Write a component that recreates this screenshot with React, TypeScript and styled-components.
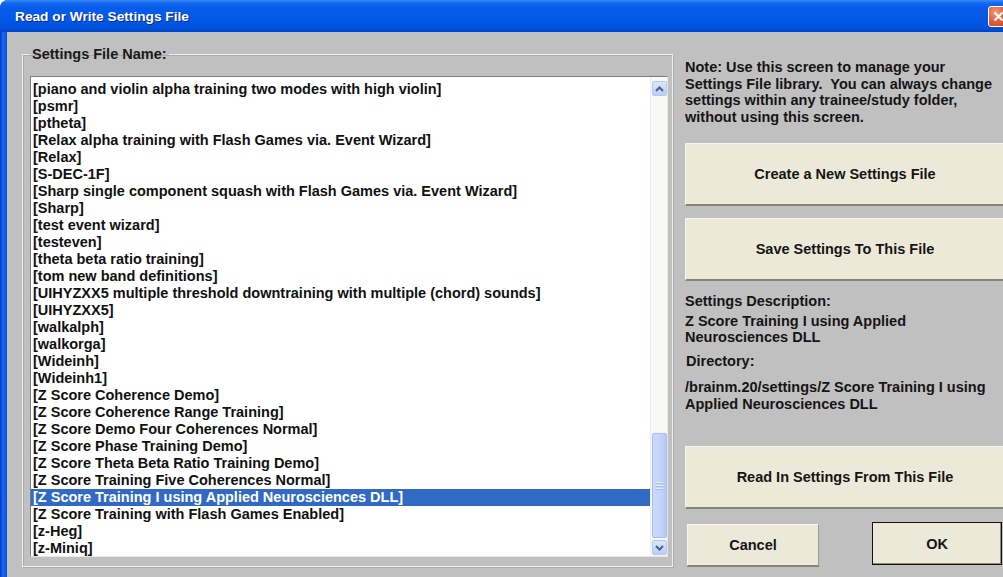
import React from "react";
import styled, { createGlobalStyle } from "styled-components";

const GlobalStyle = createGlobalStyle`
  html, body {
    margin: 0;
    padding: 0;
    width: 1003px;
    height: 577px;
    overflow: hidden;
    background: #ffffff;
  }
  #root {
    width: 1003px;
    height: 577px;
    overflow: hidden;
  }
  * { box-sizing: border-box; }
`;

const TEXT_SIZE = "14.5px";

const Window = styled.div`
  width: 1016px;
  height: 577px;
  display: flex;
  flex-direction: column;
  background: #0a4fd6;
  border-radius: 8px 8px 0 0;
  overflow: hidden;
  font-family: "Liberation Sans", Arial, sans-serif;
  font-weight: bold;
  color: #111111;
`;

const TitleBar = styled.div`
  height: 32px;
  flex: none;
  display: flex;
  align-items: center;
  justify-content: space-between;
  padding: 0 7px 0 15px;
  background: linear-gradient(
    to bottom,
    #3a8cf8 0px,
    #1468f0 3px,
    #065ce8 8px,
    #0458e6 20px,
    #0050dc 28px,
    #0044c8 32px
  );
`;

const TitleText = styled.span`
  color: #ffffff;
  font-size: 13.7px;
  font-weight: bold;
  text-shadow: 1px 1px 0 #0b2a8f;
`;

const CloseButton = styled.div`
  width: 21px;
  height: 21px;
  border: 1px solid #ffffff;
  border-radius: 3px;
  background: radial-gradient(circle at 35% 30%, #f19a7e 0%, #e2653f 45%, #c5401b 100%);
  display: flex;
  align-items: center;
  justify-content: center;
`;

const Frame = styled.div`
  flex: 1;
  display: flex;
  padding: 0 6px 0 7px;
  background: linear-gradient(to right, #0831c9 0px, #166aee 3px, #0b4fd8 7px);
  min-height: 0;
`;

const Content = styled.div`
  flex: 1;
  display: flex;
  align-items: flex-start;
  background: #c0c0c0;
  padding-left: 15px;
`;

const GroupBox = styled.fieldset`
  margin: 14px 0 0 0;
  width: 651px;
  height: 521px;
  padding: 14px 4px 8px 7px;
  border: 1px solid #efefef;
  box-shadow: inset 1px 1px 0 #a9a9a9, 1px 1px 0 #a9a9a9;
  display: flex;
  flex-direction: column;
`;

const Legend = styled.legend`
  padding: 0 2px;
  font-size: ${TEXT_SIZE};
  line-height: 16px;
  font-weight: bold;
  color: #1a1a1a;
`;

const ListBox = styled.div`
  width: 638px;
  height: 481px;
  display: flex;
  background: #ffffff;
  border: 1px solid;
  border-color: #7c7c7c #e6e6e6 #e6e6e6 #7c7c7c;
`;

const Rows = styled.div`
  flex: 1;
  padding-top: 4px;
  overflow: hidden;
`;

const Row = styled.div<{ $selected?: boolean }>`
  height: 17px;
  line-height: 17px;
  padding-left: 2px;
  font-size: ${TEXT_SIZE};
  font-weight: bold;
  white-space: nowrap;
  color: ${(p) => (p.$selected ? "#ffffff" : "#111111")};
  background: ${(p) => (p.$selected ? "#316ac5" : "transparent")};
`;

const ScrollBar = styled.div`
  width: 17px;
  flex: none;
  display: flex;
  flex-direction: column;
  align-items: center;
  padding: 4px 0 1px;
  background: #f8f8f4;
  border-left: 1px solid #eeeee8;
`;

const ArrowButton = styled.div`
  width: 15px;
  height: 15px;
  flex: none;
  border: 1px solid #b4c8f6;
  border-radius: 2px;
  background: linear-gradient(to bottom, #dbe6fd, #bccdf8);
  display: flex;
  align-items: center;
  justify-content: center;
`;

const Track = styled.div`
  flex: 1;
`;

const Thumb = styled.div`
  width: 15px;
  height: 105px;
  flex: none;
  margin-bottom: 2px;
  border: 1px solid #a8bdf0;
  border-radius: 2px;
  background: linear-gradient(to right, #cbd9fd, #c2d3fb 60%, #b6c9f6);
  display: flex;
  flex-direction: column;
  align-items: center;
  justify-content: center;
  gap: 2px;
`;

const GripLine = styled.div`
  width: 7px;
  height: 1px;
  background: #e9effe;
  box-shadow: 0 1px 0 #a4b9ec;
`;

const SidePanel = styled.div`
  width: 320px;
  margin-left: 12px;
  padding-top: 27px;
  display: flex;
  flex-direction: column;
`;

const Paragraph = styled.div<{ $gap?: number; $indent?: number }>`
  margin-top: ${(p) => p.$gap ?? 0}px;
  padding-left: ${(p) => p.$indent ?? 0}px;
  font-size: ${TEXT_SIZE};
  line-height: 16.5px;
  font-weight: bold;
  color: #151515;
  white-space: nowrap;
`;

const BigButton = styled.div<{ $gap: number }>`
  margin-top: ${(p) => p.$gap}px;
  height: 63px;
  display: flex;
  align-items: center;
  justify-content: center;
  font-size: ${TEXT_SIZE};
  font-weight: bold;
  color: #151515;
  background: #ece9d8;
  border-top: 1px solid #f7f6ef;
  border-left: 1px solid #f7f6ef;
  border-right: 1px solid #9d9b90;
  border-bottom: 2px solid #85837a;
`;

const ButtonRow = styled.div`
  margin-top: 13px;
  display: flex;
  align-items: flex-start;
  justify-content: space-between;
  padding: 0 3px 0 2px;
`;

const SmallButton = styled.div<{ $default?: boolean }>`
  width: ${(p) => (p.$default ? 130 : 132)}px;
  height: ${(p) => (p.$default ? 43 : 42)}px;
  margin-top: ${(p) => (p.$default ? 0 : 2)}px;
  display: flex;
  align-items: center;
  justify-content: center;
  font-size: ${TEXT_SIZE};
  font-weight: bold;
  color: #151515;
  background: #ece9d8;
  border: 1px solid;
  border-color: ${(p) =>
    p.$default ? "#111111" : "#f7f6ef #9d9b90 #85837a #f7f6ef"};
  box-shadow: ${(p) =>
    p.$default ? "inset -1px -1px 0 #8d8b80" : "0 1px 0 #85837a"};
`;

const files = [
  "[piano and violin alpha training two modes with high violin]",
  "[psmr]",
  "[ptheta]",
  "[Relax alpha training with Flash Games via. Event Wizard]",
  "[Relax]",
  "[S-DEC-1F]",
  "[Sharp single component squash with Flash Games via. Event Wizard]",
  "[Sharp]",
  "[test event wizard]",
  "[testeven]",
  "[theta beta ratio training]",
  "[tom new band definitions]",
  "[UIHYZXX5 multiple threshold downtraining with multiple (chord) sounds]",
  "[UIHYZXX5]",
  "[walkalph]",
  "[walkorga]",
  "[Wideinh]",
  "[Wideinh1]",
  "[Z Score Coherence Demo]",
  "[Z Score Coherence Range Training]",
  "[Z Score Demo Four Coherences Normal]",
  "[Z Score Phase Training Demo]",
  "[Z Score Theta Beta Ratio Training Demo]",
  "[Z Score Training Five Coherences Normal]",
  "[Z Score Training I using Applied Neurosciences DLL]",
  "[Z Score Training with Flash Games Enabled]",
  "[z-Heg]",
  "[z-Miniq]",
];

const selectedFile = "[Z Score Training I using Applied Neurosciences DLL]";

const Chevron = ({ up }: { up?: boolean }) => (
  <svg width="9" height="6" viewBox="0 0 9 6">
    <polyline
      points={up ? "1,5 4.5,1.5 8,5" : "1,1 4.5,4.5 8,1"}
      fill="none"
      stroke="#4d6185"
      strokeWidth="2"
    />
  </svg>
);

export default function App() {
  return (
    <>
      <GlobalStyle />
      <Window>
        <TitleBar>
          <TitleText>Read or Write Settings File</TitleText>
          <CloseButton>
            <svg width="11" height="11" viewBox="0 0 11 11">
              <path d="M1.5 1.5 L9.5 9.5 M9.5 1.5 L1.5 9.5" stroke="#ffffff" strokeWidth="2" />
            </svg>
          </CloseButton>
        </TitleBar>
        <Frame>
          <Content>
            <GroupBox>
              <Legend>Settings File Name:</Legend>
              <ListBox>
                <Rows>
                  {files.map((f) => (
                    <Row key={f} $selected={f === selectedFile}>
                      {f}
                    </Row>
                  ))}
                </Rows>
                <ScrollBar>
                  <ArrowButton>
                    <Chevron up />
                  </ArrowButton>
                  <Track />
                  <Thumb>
                    <GripLine />
                    <GripLine />
                    <GripLine />
                  </Thumb>
                  <ArrowButton>
                    <Chevron />
                  </ArrowButton>
                </ScrollBar>
              </ListBox>
            </GroupBox>
            <SidePanel>
              <Paragraph>
                Note: Use this screen to manage your
                <br />
                Settings File library.&nbsp; You can always change
                <br />
                settings within any trainee/study folder,
                <br />
                without using this screen.
              </Paragraph>
              <BigButton $gap={18}>Create a New Settings File</BigButton>
              <BigButton $gap={12}>Save Settings To This File</BigButton>
              <Paragraph $gap={12}>Settings Description:</Paragraph>
              <Paragraph $gap={3}>
                Z Score Training I using Applied
                <br />
                Neurosciences DLL
              </Paragraph>
              <Paragraph $gap={7} $indent={1}>
                Directory:
              </Paragraph>
              <Paragraph $gap={10}>
                /brainm.20/settings/Z Score Training I using
                <br />
                Applied Neurosciences DLL
              </Paragraph>
              <BigButton $gap={34}>Read In Settings From This File</BigButton>
              <ButtonRow>
                <SmallButton>Cancel</SmallButton>
                <SmallButton $default>OK</SmallButton>
              </ButtonRow>
            </SidePanel>
          </Content>
        </Frame>
      </Window>
    </>
  );
}
